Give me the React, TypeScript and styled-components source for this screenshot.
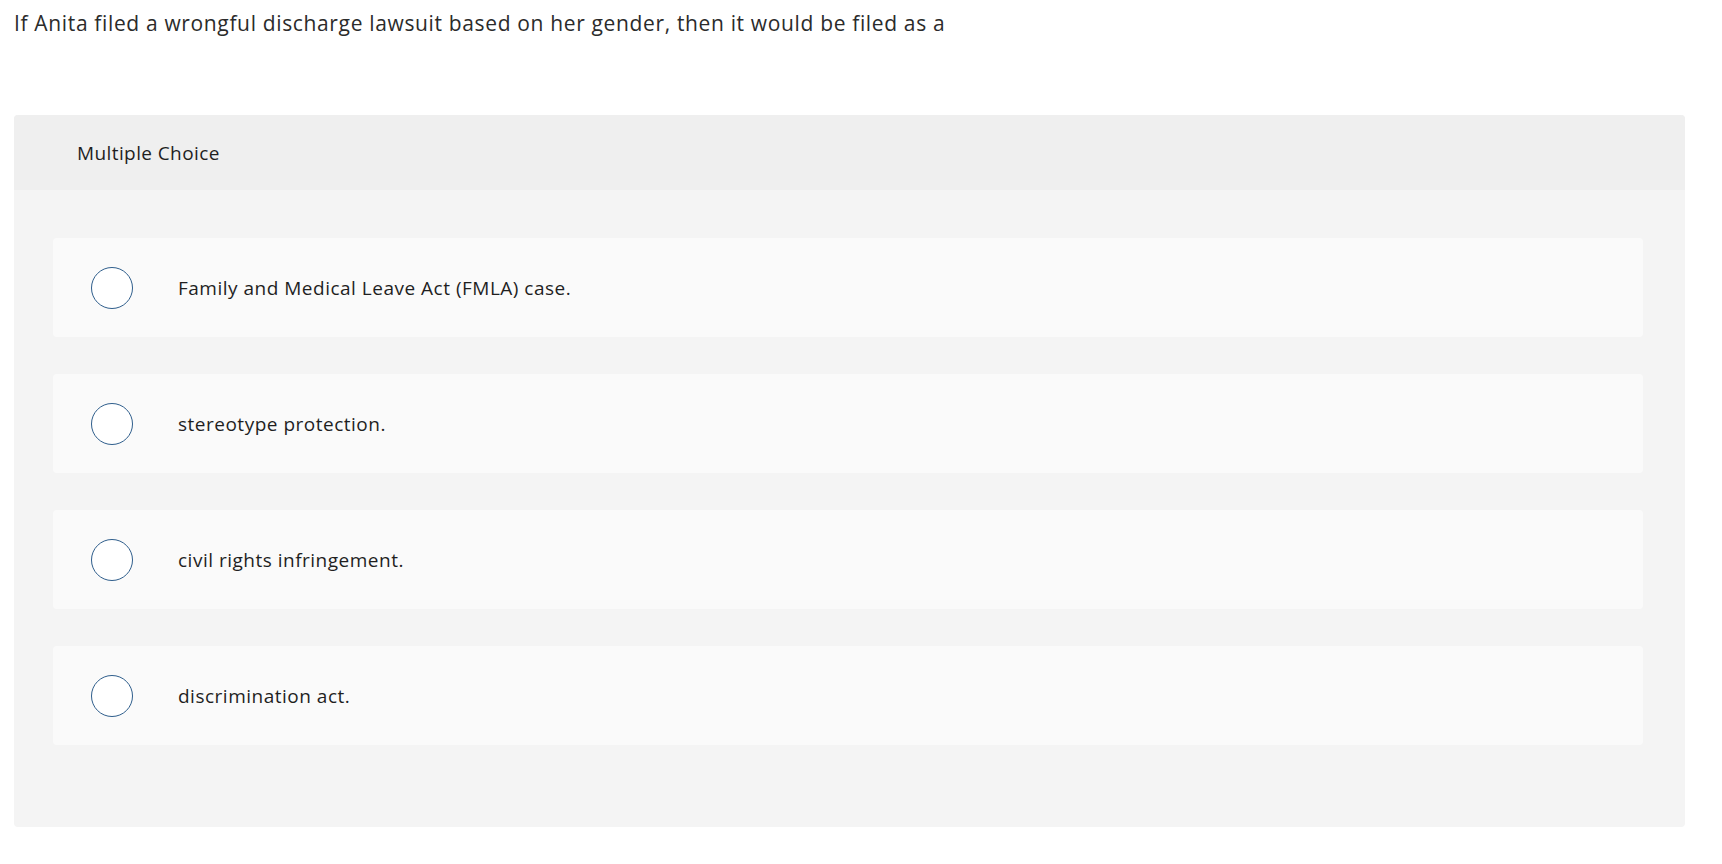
import React from "react";
import styled, { createGlobalStyle } from "styled-components";

const Global = createGlobalStyle`
  html, body { margin: 0; padding: 0; background: #ffffff; }
  body { font-family: "Open Sans", Lato, sans-serif; color: #222222; }
`;

const Page = styled.main`
  padding: 9px 37px 40px 14px;
`;

const Question = styled.p`
  margin: 0;
  font-size: 21px;
  line-height: 28px;
  letter-spacing: 0.65px;
  color: #2b2b2b;
`;

const Card = styled.section`
  margin-top: 78px;
  border-radius: 4px;
  overflow: hidden;
  background: #f4f4f4;
`;

const CardHeader = styled.header`
  height: 75px;
  display: flex;
  align-items: center;
  padding-left: 63px;
  background: #efefef;
  font-size: 19px;
  letter-spacing: 0.4px;
  color: #1f1f1f;
`;

const OptionList = styled.div`
  display: flex;
  flex-direction: column;
  gap: 37px;
  padding: 48px 42px 82px 39px;
`;

const Option = styled.label`
  height: 99px;
  display: flex;
  align-items: center;
  padding-left: 38px;
  background: #fafafa;
  border-radius: 4px;
  cursor: pointer;
`;

const Radio = styled.span`
  width: 40px;
  height: 40px;
  flex: none;
  border-radius: 50%;
  border: 1.5px solid #2f5e8c;
  background: #ffffff;
`;

const OptionText = styled.span`
  margin-left: 45px;
  font-size: 19px;
  letter-spacing: 0.5px;
  color: #1f1f1f;
`;

const options = [
  "Family and Medical Leave Act (FMLA) case.",
  "stereotype protection.",
  "civil rights infringement.",
  "discrimination act.",
];

export default function App() {
  return (
    <>
      <Global />
      <Page>
        <Question>
          If Anita filed a wrongful discharge lawsuit based on her gender, then it would be filed as a
        </Question>
        <Card>
          <CardHeader>Multiple Choice</CardHeader>
          <OptionList>
            {options.map((o) => (
              <Option key={o}>
                <Radio />
                <OptionText>{o}</OptionText>
              </Option>
            ))}
          </OptionList>
        </Card>
      </Page>
    </>
  );
}
